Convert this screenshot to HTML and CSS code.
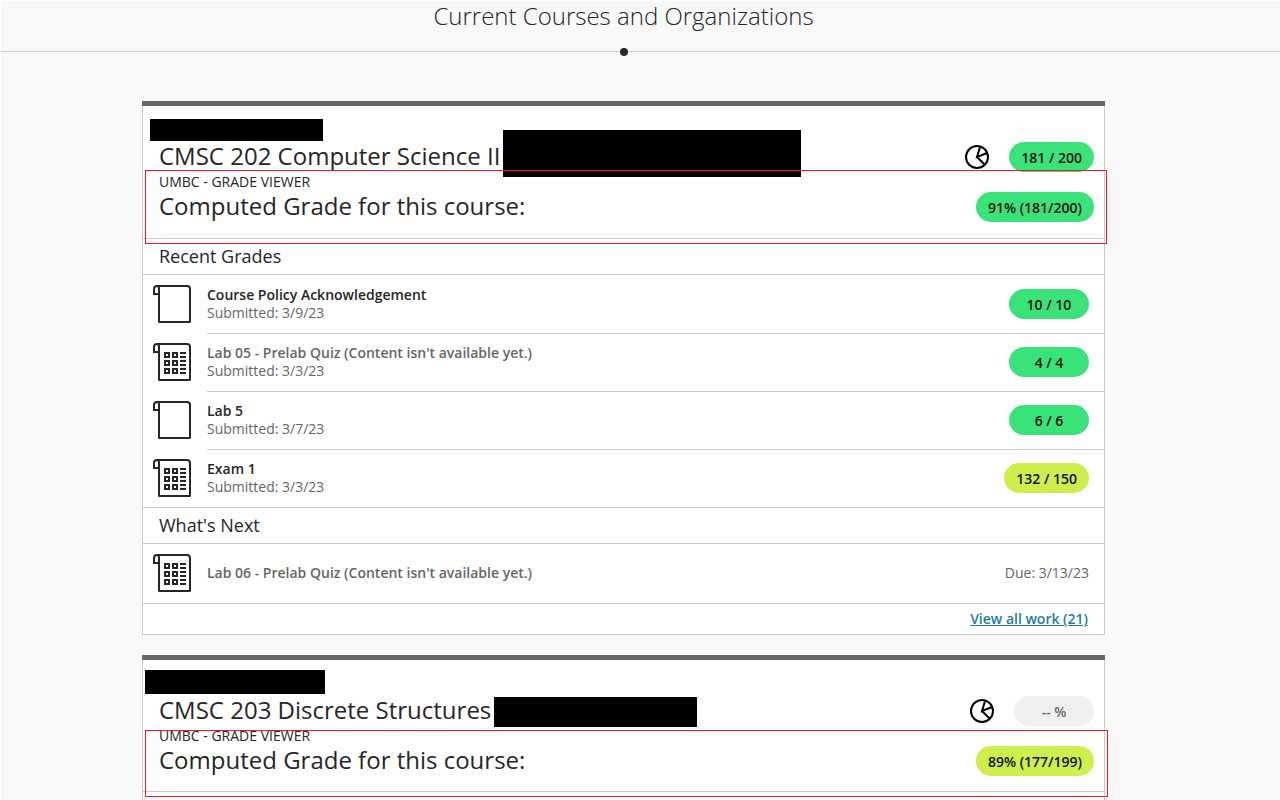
FILE: index.html
```html
<!DOCTYPE html>
<html lang="en">
<head>
<meta charset="utf-8">
<title>Current Courses and Organizations</title>
<link rel="stylesheet" href="styles.css">
</head>
<body>
<svg class="defs" aria-hidden="true">
  <symbol id="scroll" viewBox="0 0 38 38">
    <path d="M6 9.500V36.500Q6 37 6.500 37H36.500Q37 37 37 36.500V4Q37 1 34 1H4Q1 1 1 4V9H6V3.500Q6 1 4 1" fill="none" stroke="#262626" stroke-width="2"/>
  </symbol>
  <symbol id="quiz" viewBox="0 0 38 38">
    <use href="#scroll"/>
    <path d="M12 10h4v4h-4zM20 10h4v4h-4zM12 18h4v4h-4zM20 18h4v4h-4zM12 26h4v4h-4zM20 26h4v4h-4zM27 10h6M27 14h6M27 18h6M27 22h6M27 26h6M27 30h6" fill="none" stroke="#262626" stroke-width="2"/>
  </symbol>
  <symbol id="pie" viewBox="0 0 24 24">
    <path d="M12 1a11 11 0 1 0 0 22a11 11 0 1 0 0-22M15 2L12 12L22 8M12 12L19.500 19.500" fill="none" stroke="#000" stroke-width="2"/>
  </symbol>
</svg>
<header class="term">
  <h1 class="term-title">Current Courses and Organizations</h1>
</header>
<main class="courses">
  <article class="card">
    <div class="card-head">
      <div class="head-row">
        <h2 class="course-title">CMSC 202 Computer Science II</h2>
        <button class="pie-button" type="button" aria-label="Grade breakdown"><svg class="pie"><use href="#pie"/></svg></button>
        <span class="pill green">181 / 200</span>
      </div>
      <p class="viewer">UMBC - GRADE VIEWER</p>
      <div class="head-row">
        <h3 class="course-title">Computed Grade for this course:</h3>
        <span class="pill green">91% (181/200)</span>
      </div>
    </div>
    <h3 class="section-title">Recent Grades</h3>
    <ul class="work-list">
      <li class="work"><svg class="work-icon"><use href="#scroll"/></svg>
        <div class="work-body"><div class="work-text"><p class="work-name">Course Policy Acknowledgement</p><p class="work-date">Submitted: 3/9/23</p></div><span class="pill green">10 / 10</span></div></li>
      <li class="work"><svg class="work-icon"><use href="#quiz"/></svg>
        <div class="work-body"><div class="work-text"><p class="work-name muted">Lab 05 - Prelab Quiz (Content isn't available yet.)</p><p class="work-date">Submitted: 3/3/23</p></div><span class="pill green">4 / 4</span></div></li>
      <li class="work"><svg class="work-icon"><use href="#scroll"/></svg>
        <div class="work-body"><div class="work-text"><p class="work-name">Lab 5</p><p class="work-date">Submitted: 3/7/23</p></div><span class="pill green">6 / 6</span></div></li>
      <li class="work"><svg class="work-icon"><use href="#quiz"/></svg>
        <div class="work-body"><div class="work-text"><p class="work-name">Exam 1</p><p class="work-date">Submitted: 3/3/23</p></div><span class="pill lime">132 / 150</span></div></li>
    </ul>
    <h3 class="section-title">What's Next</h3>
    <ul class="work-list next">
      <li class="work"><svg class="work-icon"><use href="#quiz"/></svg>
        <div class="work-body"><p class="work-name muted">Lab 06 - Prelab Quiz (Content isn't available yet.)</p><span class="work-date">Due: 3/13/23</span></div></li>
    </ul>
    <div class="card-foot"><a class="all-work" href="#">View all work (21)</a></div>
    <span class="redact id-a"></span>
    <span class="redact name-a"></span>
    <span class="mark mark-a"></span>
  </article>
  <article class="card card-last">
    <div class="card-head">
      <div class="head-row">
        <h2 class="course-title">CMSC 203 Discrete Structures</h2>
        <button class="pie-button" type="button" aria-label="Grade breakdown"><svg class="pie"><use href="#pie"/></svg></button>
        <span class="pill none">-- %</span>
      </div>
      <p class="viewer">UMBC - GRADE VIEWER</p>
      <div class="head-row">
        <h3 class="course-title">Computed Grade for this course:</h3>
        <span class="pill lime">89% (177/199)</span>
      </div>
    </div>
    <span class="redact id-b"></span>
    <span class="redact name-b"></span>
    <span class="mark mark-b"></span>
  </article>
</main>
</body>
</html>
```
FILE: styles.css
```css
* { box-sizing: border-box; }
body {
  margin: 0;
  min-height: 100vh;
  display: flex;
  flex-direction: column;
  border-top: 1px solid #fff;
  border-left: 1px solid #fff;
  background: #f8f8f8;
  color: #262626;
  font: 14px/18px "Open Sans", sans-serif;
}
h1, h2, h3, p, ul { margin: 0; padding: 0; font-weight: 400; }
.defs { position: absolute; width: 0; height: 0; }

.term {
  position: relative;
  padding-right: 34px;
  border-bottom: 1px solid #ccc;
}
.term-title {
  padding-bottom: 20px;
  font-size: 24px;
  font-weight: 300;
  line-height: 30px;
  text-align: center;
}
.term::after {
  content: "";
  position: absolute;
  left: calc(50% - 21px);
  bottom: -5px;
  width: 8px;
  height: 8px;
  border-radius: 50%;
  background: #262626;
}

.courses {
  flex: 1;
  display: flex;
  flex-direction: column;
  gap: 20px;
  padding: 49px 175px 0 141px;
}
.card {
  position: relative;
  background: #fff;
  border: 1px solid #ccc;
  border-top: 0;
  padding-top: 5px;
}
.card::before {
  content: "";
  position: absolute;
  top: 0;
  left: -1px;
  right: -1px;
  height: 5px;
  background: #666;
}
.card-last { flex: 1; border-bottom: 0; }
.card-head {
  padding: 34px 10px 14px 16px;
  border-bottom: 1px solid #ccc;
}
.card-last .card-head { padding-bottom: 13px; }
.head-row { display: flex; align-items: center; }
.course-title {
  flex: 1;
  padding-bottom: 2px;
  font-size: 24px;
  line-height: 32px;
}
.viewer { line-height: 16px; }
.pie-button {
  width: 24px;
  height: 24px;
  margin-right: 20px;
  padding: 0;
  border: 0;
  background: none;
}
.pie { display: block; width: 24px; height: 24px; }

.pill {
  min-width: 80px;
  padding: 2px 12px 0;
  border-radius: 15px;
  font-weight: 600;
  line-height: 28px;
  text-align: center;
  color: #111;
}
.green { background: #3ae37a; }
.lime { background: #cdee4b; }
.none { background: #efefef; color: #666; }

.section-title {
  padding-left: 16px;
  border-bottom: 1px solid #ccc;
  font-size: 18px;
  line-height: 35px;
}
.work-list { padding-top: 1px; list-style: none; border-bottom: 1px solid #ccc; }
.work { display: flex; padding-left: 10px; gap: 16px; }
.work-icon { flex: none; width: 38px; height: 38px; margin-top: 9px; }
.work-body {
  flex: 1;
  display: flex;
  align-items: center;
  justify-content: space-between;
  min-height: 58px;
  padding: 0 15px 2px 0;
  border-bottom: 1px solid #ccc;
}
.work:last-child .work-body { min-height: 57px; border-bottom: 0; }
.next .work:last-child .work-body { min-height: 58px; }
.work-name { font-weight: 600; }
.muted, .work-date { color: #666; }

.card-foot { padding: 6px 16px 6px 0; text-align: right; }
.all-work { color: #1f7aa8; font-weight: 600; }

.redact { position: absolute; background: #000; }
.id-a { left: 7px; top: 18px; width: 173px; height: 22px; }
.name-a { left: 360px; top: 29px; width: 298px; height: 47px; }
.id-b { left: 2px; top: 15px; width: 180px; height: 24px; }
.name-b { left: 351px; top: 42px; width: 203px; height: 30px; }
.mark { position: absolute; border: 1px solid #ed1c24; pointer-events: none; }
.mark-a { left: 2px; right: -3px; top: 69px; height: 74px; }
.mark-b { left: 2px; right: -4px; top: 75px; height: 67px; }
```
